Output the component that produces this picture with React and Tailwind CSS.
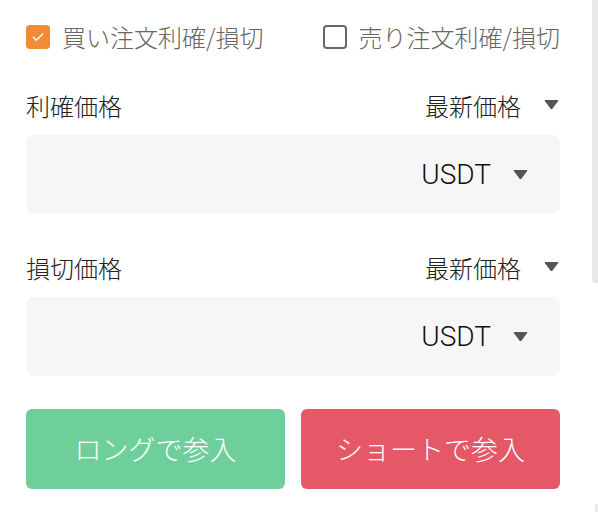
import React from 'react';

const Caret = ({ className = '' }) => (
  <svg viewBox="0 0 15 11" className={`w-[15px] h-[11px] ${className}`}>
    <path d="M1.6 1 H13.4 Q14.8 1 14 2.3 L8.6 9.4 Q7.5 10.6 6.4 9.4 L1 2.3 Q0.2 1 1.6 1 Z" fill="#555" />
  </svg>
);

const Check = ({ checked, label }) => (
  <label className="flex items-center gap-3 cursor-pointer">
    {checked ? (
      <span className="w-6 h-6 rounded-[4px] bg-[#f28b37] flex items-center justify-center">
        <svg viewBox="0 0 24 24" className="w-[16px] h-[16px]" fill="none" stroke="#fff" strokeWidth="2" strokeLinecap="round" strokeLinejoin="round">
          <path d="M5 12.5l4.5 4.5L19 7.5" />
        </svg>
      </span>
    ) : (
      <span className="w-6 h-6 rounded-[4px] border-2 border-[#666] bg-white" />
    )}
    <span className="text-[24px] leading-none font-light text-[#666]">{label}</span>
  </label>
);

const PriceField = ({ label }) => (
  <div>
    <div className="flex items-center justify-between h-7">
      <span className="text-[24px] leading-none font-light text-[#222]">{label}</span>
      <button className="flex items-center gap-[23px] text-[24px] leading-none font-light text-[#222] pr-px">
        最新価格
        <Caret className="-mt-[3px]" />
      </button>
    </div>
    <div className="mt-[15px] h-[79px] rounded-lg bg-[#f6f6f6] flex items-center justify-end pr-[32px] gap-[22px]">
      <span className="text-[28px] leading-none font-light text-[#111] font-['Roboto','Liberation_Sans',sans-serif]">USDT</span>
      <Caret />
    </div>
  </div>
);

export default function App() {
  return (
    <div className="relative w-[598px] h-[512px] bg-white overflow-hidden font-['Noto_Sans_CJK_JP','Noto_Sans',sans-serif]">
      <div className="pl-[26px] pr-[38px] pt-[25px]">
        <div className="flex items-center justify-between h-6">
          <Check checked label="買い注文利確/損切" />
          <Check label="売り注文利確/損切" />
        </div>
        <div className="mt-[43px]">
          <PriceField label="利確価格" />
        </div>
        <div className="mt-[40px]">
          <PriceField label="損切価格" />
        </div>
        <div className="mt-[33px] grid grid-cols-2 gap-4">
          <button className="h-[80px] rounded-md bg-[#6fcf9b] text-white text-[27px] font-light">ロングで参入</button>
          <button className="h-[80px] rounded-md bg-[#e55867] text-white text-[27px] font-light">ショートで参入</button>
        </div>
      </div>
      <div className="absolute right-0 top-0 w-[6px] h-[283px] bg-[#e8e8e8] rounded-bl-[4px]" />
      <div className="absolute right-0 bottom-0 w-[3px] h-[8px] bg-[#ececec]" />
    </div>
  );
}
